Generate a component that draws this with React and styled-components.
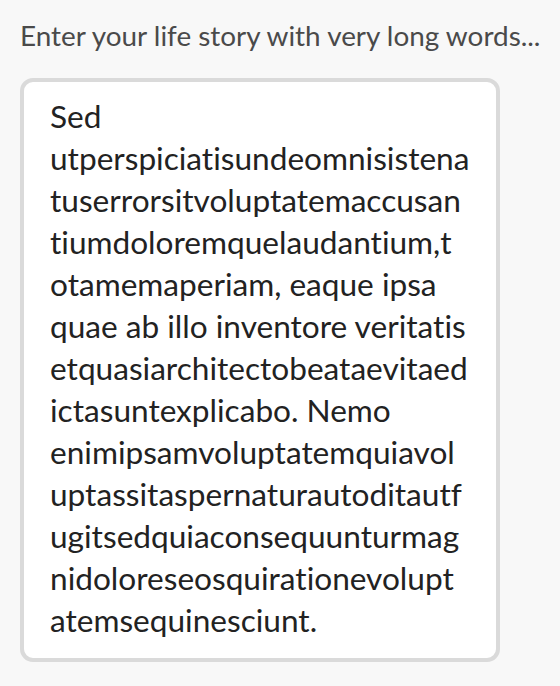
import React from "react";
import styled, { createGlobalStyle } from "styled-components";

const GlobalStyle = createGlobalStyle`
  html, body { margin: 0; padding: 0; background: #f8f8f8; }
  body { font-family: "Lato", "Open Sans", sans-serif; font-variant-ligatures: none; }
`;

const Field = styled.div`
  display: flex;
  flex-direction: column;
  align-items: flex-start;
  padding: 17px 0 0 20px;
`;

const Label = styled.label`
  font-family: "Lato", sans-serif;
  font-size: 27.9px;
  line-height: 36px;
  color: #4a4a4a;
  font-variant-ligatures: none;
  margin-bottom: 25px;
`;

const TextBox = styled.div`
  box-sizing: border-box;
  width: 480px;
  height: 584px;
  border: 4px solid #dadada;
  border-radius: 13px;
  background: #ffffff;
  padding: 12.5px 18px 0 26px;
  font-family: "Lato", sans-serif;
  font-size: 31.6px;
  line-height: 42px;
  color: #222222;
  font-variant-ligatures: none;
  overflow: hidden;
`;

const Line = styled.span`
  display: block;
  white-space: nowrap;
`;

const lines = [
  "Sed",
  "utperspiciatisundeomnisistena",
  "tuserrorsitvoluptatemaccusan",
  "tiumdoloremquelaudantium,t",
  "otamemaperiam, eaque ipsa",
  "quae ab illo inventore veritatis",
  "etquasiarchitectobeataevitaed",
  "ictasuntexplicabo. Nemo",
  "enimipsamvoluptatemquiavol",
  "uptassitaspernaturautoditautf",
  "ugitsedquiaconsequunturmag",
  "nidoloreseosquirationevolupt",
  "atemsequinesciunt.",
];

export default function App() {
  return (
    <>
      <GlobalStyle />
      <Field>
        <Label id="story-label">Enter your life story with very long words...</Label>
        <TextBox role="textbox" aria-multiline="true" aria-labelledby="story-label">
          {lines.map((l, i) => (
            <Line key={i}>{l}</Line>
          ))}
        </TextBox>
      </Field>
    </>
  );
}
